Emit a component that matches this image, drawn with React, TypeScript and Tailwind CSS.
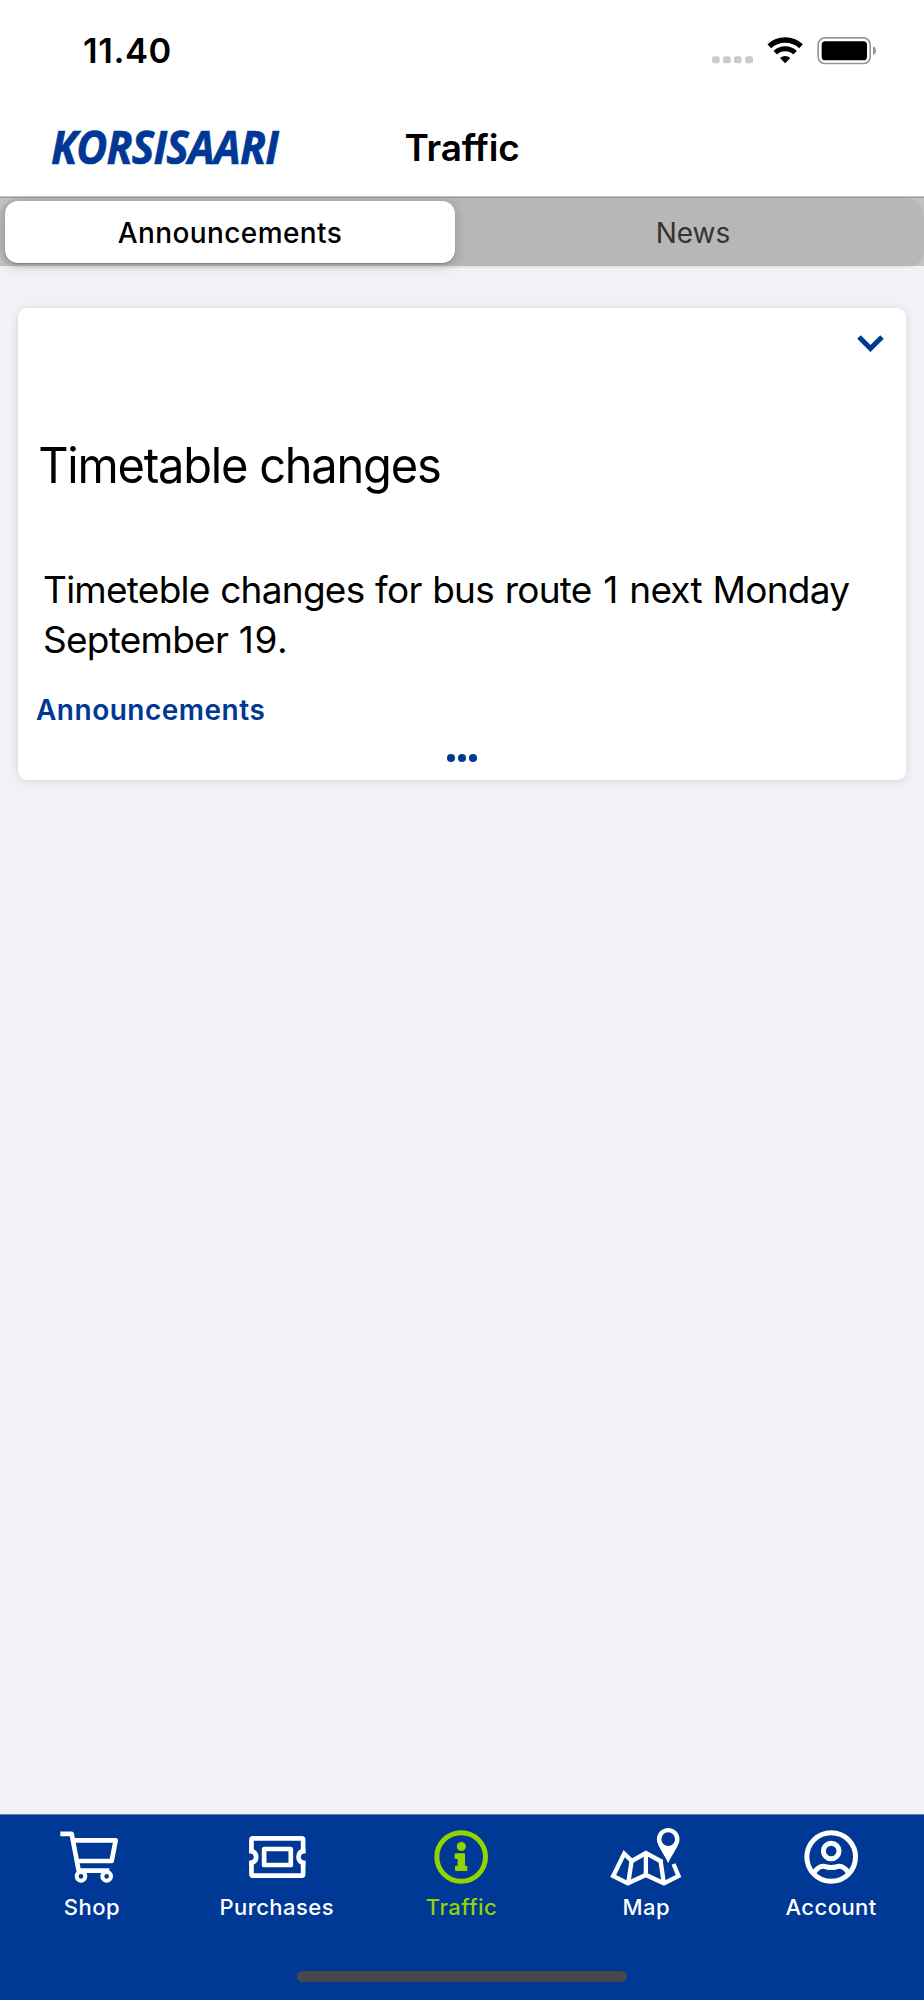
import type { ReactNode } from "react";

const ShopIcon = () => (
  <svg viewBox="72 75 228 192" className="h-16 w-[76px]" fill="none" stroke="currentColor" strokeWidth={14} strokeLinejoin="round">
    <path d="M91 101.500H125L146 212H238" />
    <path d="M130 121H257L245 183H141" />
    <circle cx="153" cy="229" r="13" strokeWidth={12} />
    <circle cx="230" cy="229" r="13" strokeWidth={12} />
  </svg>
);

const PurchasesIcon = () => (
  <svg viewBox="627.6 75 228 192" className="h-16 w-[76px]" fill="none" stroke="currentColor" strokeWidth={14} strokeLinejoin="round">
    <path d="M665 160V119Q665 115 669 115H816Q820 115 820 119V160" />
    <path d="M665 182V223Q665 227 669 227H816Q820 227 820 223V182" />
    <path d="M658 152Q679 154 679 171Q679 188 658 190" />
    <path d="M827 152Q806 154 806 171Q806 188 827 190" />
    <rect x="703" y="147" width="80" height="48" rx="1" />
  </svg>
);

const TrafficIcon = () => (
  <svg viewBox="72 75 228 192" className="h-16 w-[76px]" fill="currentColor">
    <circle cx="183.5" cy="171" r="73" fill="none" stroke="currentColor" strokeWidth={15} />
    <circle cx="184" cy="139.500" r="13.500" />
    <path d="M167 160H192Q195 160 195 163V197H199Q202 197 202 200V210Q202 213 199 213H168Q165 213 165 210V200Q165 197 168 197H173V177H167Q164 177 164 174V163Q164 160 167 160Z" />
  </svg>
);

const MapIcon = () => (
  <svg viewBox="626.4 75 228 192" className="h-16 w-[76px]" fill="none" stroke="currentColor" strokeWidth={13}>
    <path d="M786 186L737 159L695 183L672 161L639 228L683 250L737 225L791 250L835 228L820 192" />
    <path d="M694 184L684 250M737 159V225M781 182L791 250" />
    <path
      fill="currentColor"
      stroke="none"
      fillRule="evenodd"
      d="M804 84C823 84 838 99 838 118C838 137 817 160 804 190C791 160 770 137 770 118C770 99 785 84 804 84ZM804 97A20.500 20.500 0 1 0 804 138A20.500 20.500 0 1 0 804 97Z"
    />
  </svg>
);

const AccountIcon = () => (
  <svg viewBox="281.4 75 228 192" className="h-16 w-[76px]" fill="none" stroke="currentColor" strokeWidth={15}>
    <circle cx="393" cy="171" r="73" />
    <circle cx="393" cy="153" r="23.500" />
    <path d="M341 218Q359 192 379 201Q393 204 407 201Q427 192 445 218" />
  </svg>
);

const StatusIcons = () => (
  <svg viewBox="210 105 510 90" className="h-[30px] w-[170px]">
    <g fill="#cbcbcb">
      <rect x="216" y="166" width="23" height="21" rx="6" />
      <rect x="249" y="166" width="23" height="21" rx="6" />
      <rect x="282" y="166" width="23" height="21" rx="6" />
      <rect x="316" y="166" width="23" height="21" rx="6" />
    </g>
    <g fill="none" stroke="#000">
      <path d="M387.800 135.800A70 70 0 0 1 483.200 135.800" strokeWidth={16} />
      <path d="M405.800 155.200A43.500 43.500 0 0 1 465.200 155.200" strokeWidth={15} />
    </g>
    <path d="M435.500 187L420 171A24 24 0 0 1 451 171Z" />
    <rect x="534.500" y="110.500" width="156" height="77" rx="20" fill="none" stroke="#999" strokeWidth={5} />
    <rect x="545" y="121" width="136" height="57" rx="11" />
    <path d="M699 136Q708 140 708 149Q708 158 699 162Z" fill="#999" />
  </svg>
);

type Tab = { label: string; icon: ReactNode; active?: boolean };

const tabs: Tab[] = [
  { label: "Shop", icon: <ShopIcon /> },
  { label: "Purchases", icon: <PurchasesIcon /> },
  { label: "Traffic", icon: <TrafficIcon />, active: true },
  { label: "Map", icon: <MapIcon /> },
  { label: "Account", icon: <AccountIcon /> },
];

const App = () => {
  return (
    <div className="flex h-[2000px] w-[924px] flex-col overflow-hidden bg-[#f2f1f6] font-['Inter',sans-serif] text-black">
      {/* Status bar */}
      <div className="flex h-[101px] items-center justify-between bg-white pr-11 pl-[83px]">
        <span className="text-[34.5px] leading-[40px] font-semibold tracking-[0.6px]">11.40</span>
        <StatusIcons />
      </div>

      {/* Header */}
      <header className="grid h-[95px] grid-cols-[1fr_auto_1fr] items-center bg-white pb-0.5">
        <svg viewBox="0 0 300 80" className="ml-5 h-20 w-[300px] overflow-visible">
          <text
            x="31"
            y="55.500"
            textLength="227"
            lengthAdjust="spacingAndGlyphs"
            fill="#003896"
            stroke="#003896"
            strokeWidth={0.7}
            className="font-['Open_Sans',sans-serif] text-[46px] font-bold tracking-[-0.8px] italic"
          >
            KORSISAARI
          </text>
        </svg>
        <h1 className="text-[37px] leading-[44px] font-semibold tracking-[-0.2px]">Traffic</h1>
        <span />
      </header>

      {/* Segmented control */}
      <div className="h-[70px] border-t border-[#c6c6c6] bg-[#c2c2c2]">
        <div className="h-px bg-[#9c9c9c]" />
        <div className="flex h-[70px] rounded-[18px] bg-black/[0.055] pt-[3px] pl-[5px]">
          <button className="h-[62px] w-[450px] rounded-[13px] bg-white pt-px text-[28px] font-medium tracking-[0.4px] shadow-[0_1px_1px_rgba(0,0,0,0.2),0_3px_12px_rgba(0,0,0,0.2)]">
            Announcements
          </button>
          <button className="h-[62px] flex-1 pt-px pl-[7px] text-[28px] text-[#333]">News</button>
        </div>
      </div>

      {/* Announcement card */}
      <main className="flex-1 px-[18px] pt-[42px]">
        <article className="h-[472px] rounded-[9px] bg-white shadow-[0_1px_9px_rgba(0,0,30,0.12)]">
          <div className="flex h-[70px] justify-end pt-[27px] pr-[22px]">
            <svg viewBox="0 0 27 17" className="h-[17px] w-[27px]" fill="none" stroke="#003896" strokeWidth={5}>
              <path d="M2 2L13.500 13.500L25 2" />
            </svg>
          </div>
          <h2 className="mt-[58px] origin-left scale-x-[0.96] pl-[21px] text-[49px] leading-[60px] tracking-[-1.28px]">
            Timetable changes
          </h2>
          <p className="mt-[69px] pl-[25px] text-[37px] leading-[49.5px] tracking-[-0.75px] [word-spacing:1px]">
            Timeteble changes for bus route <span className="px-px">1</span> next Monday
            <br />
            September <span className="tracking-[0.6px]">19.</span>
          </p>
          <p className="mt-[26px] pl-[18px] text-[28px] leading-[40px] font-semibold tracking-[0.5px] text-[#003896]">
            Announcements
          </p>
          <div className="mt-[24px] flex justify-center gap-[3px]">
            <span className="size-2 rounded-full bg-[#003896]" />
            <span className="size-2 rounded-full bg-[#003896]" />
            <span className="size-2 rounded-full bg-[#003896]" />
          </div>
        </article>
      </main>

      {/* Bottom navigation */}
      <nav className="flex h-[186px] flex-col items-center border-t border-[#6b7f9f] bg-[#003896]">
        <div className="flex w-full pt-[10px]">
          {tabs.map((tab) => (
            <button
              key={tab.label}
              className={`flex flex-1 basis-0 flex-col items-center ${tab.active ? "text-[#90d400]" : "text-white"}`}
            >
              {tab.icon}
              <span className="mt-[3px] pr-px text-[22px] leading-[30px] font-medium tracking-[0.45px]">{tab.label}</span>
            </button>
          ))}
        </div>
        <div className="mt-[49px] h-[11px] w-[330px] rounded-full bg-[#484848]" />
      </nav>
    </div>
  );
};

export default App;
